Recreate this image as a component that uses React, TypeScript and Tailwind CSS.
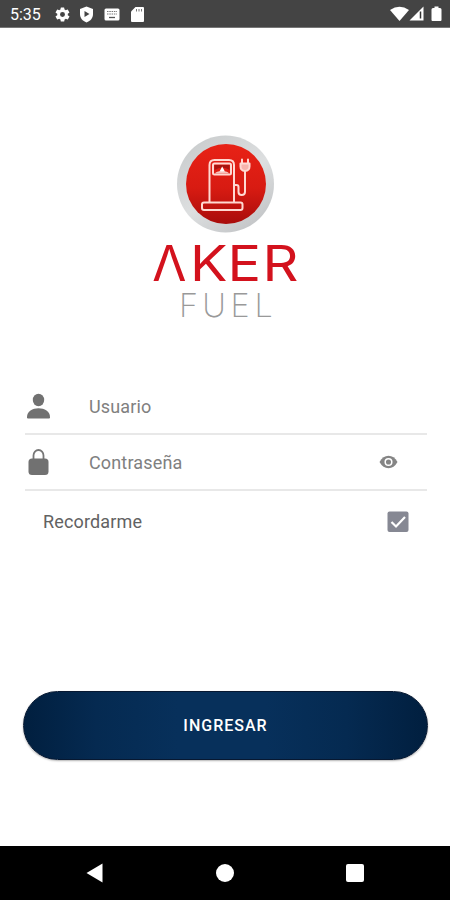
import type { ReactNode } from "react";

function StatusBar() {
  return (
    <header className="flex h-7 shrink-0 items-center justify-between border-b border-[#777] bg-[#444] pl-[10px] pr-[5px] text-white">
      <div className="flex items-center pt-[2px]">
        <span className="w-[44px] text-[16px] leading-5">5:35</span>
        <svg className="mr-[8px]" width="17" height="17" viewBox="0 0 24 24" fill="#fff">
          <path d="M19.4 13c.1-.3.1-.7.1-1s0-.7-.1-1l2.1-1.6a.5.5 0 0 0 .1-.6l-2-3.5a.5.5 0 0 0-.6-.2l-2.5 1c-.5-.4-1.100-.7-1.700-1l-.4-2.600A.5.5 0 0 0 14 2h-4a.5.5 0 0 0-.5.5L9.100 5.100c-.6.2-1.200.6-1.700 1l-2.500-1a.5.5 0 0 0-.6.2l-2 3.500a.5.5 0 0 0 .1.6L4.600 11v2l-2.200 1.600a.5.5 0 0 0-.1.6l2 3.500c.1.2.4.3.6.2l2.500-1c.5.4 1.100.7 1.700 1l.4 2.600c0 .3.2.5.5.5h4c.2 0 .5-.2.5-.5l.4-2.600c.6-.2 1.200-.6 1.700-1l2.500 1c.2.1.5 0 .6-.2l2-3.500a.5.5 0 0 0-.1-.6zM12 15.500a3.500 3.500 0 1 1 0-7 3.500 3.500 0 0 1 0 7z" />
        </svg>
        <svg className="mr-[10px]" width="15" height="17" viewBox="0 0 15 17">
          <path d="M7.500.5 14 3v5c0 4-2.500 7-6.500 8.500C3.500 15 1 12 1 8V3z" fill="#fff" />
          <path d="M5.500 5v6l5-3z" fill="#444" />
        </svg>
        <svg className="mr-[11px]" width="16" height="13" viewBox="0 0 16 13">
          <rect x=".5" y=".5" width="15" height="12" rx="1.500" fill="#fff" />
          <path d="M3 3.500h10M3 6h10" stroke="#777" strokeDasharray="1.500 .8" />
          <path d="M5 9.500h6" stroke="#555" strokeWidth="1.300" />
        </svg>
        <svg width="13" height="15" viewBox="0 0 13 15">
          <path d="M4.500 0H12a1 1 0 0 1 1 1v13a1 1 0 0 1-1 1H1a1 1 0 0 1-1-1V4.500z" fill="#fff" />
          <path d="M5.500 2v2.500M8 2v2.500M10.500 2v2.500" stroke="#777" />
        </svg>
      </div>
      <svg width="55" height="18" viewBox="0 0 55 18">
        <path d="M0 5Q9.500-1.500 19 5L9.500 16z" fill="#fff" />
        <path d="M33.500 1.500v14h-14z" fill="#fff" />
        <path d="M30.500 6.500v7" stroke="#333" strokeWidth="1.500" />
        <path d="M44.500 1.500h4V3h1.500q1.500 0 1.500 1.500V15q0 1-1 1h-8q-1 0-1-1V4.500Q41.500 3 43 3h1.500z" fill="#fff" />
      </svg>
    </header>
  );
}

function Logo() {
  return (
    <svg className="mx-auto mt-[104px] block shrink-0" width="160" height="192" viewBox="145 132 160 192">
      <defs>
        <linearGradient id="rim" x1="0" y1="0" x2=".7" y2="1">
          <stop offset="0" stopColor="#c6c9ca" />
          <stop offset=".6" stopColor="#dddfe0" />
          <stop offset="1" stopColor="#c4c6c8" />
        </linearGradient>
        <linearGradient id="disc" x1="0" y1="0" x2="0" y2="1">
          <stop offset="0" stopColor="#e82216" />
          <stop offset=".55" stopColor="#d81b12" />
          <stop offset="1" stopColor="#a80c0b" />
        </linearGradient>
      </defs>
      <circle cx="225.500" cy="184" r="48.500" fill="url(#rim)" />
      <circle cx="226" cy="184" r="40" fill="url(#disc)" />
      <g fill="none" stroke="#ffd9d2" strokeWidth="2" strokeLinejoin="round" strokeLinecap="round">
        <path d="M209.500 202v-37q0-5 5-5h14.500q5 0 5 5v37" />
        <rect x="202" y="202.500" width="40.500" height="7.500" rx="2" />
        <rect x="213" y="163.500" width="18" height="11" rx="1.500" />
        <path d="M235 185h1.500q2 0 2 2v5q0 3 3.200 3t3.300-3v-21" />
        <path d="M242 163v-3.500M248 163v-3.500" />
        <path d="M240.500 163.500h9v3q0 4-4.500 4.500-4.500-.5-4.500-4.500z" fill="#f7b4ac" />
      </g>
      <path d="M214.500 165h15v5q-7-5-15 0z" fill="#a9140f" />
      <path d="M215 173.500q1-2.500 7-2.500t7 2.500z" fill="#f7c4bd" />
      <path d="m222.200 166.500-2.700 5h5.400z" fill="#fff" />
      <g fill="#d3121d" className="font-['Inter',sans-serif] text-[49.500px]">
        <text x="152.200" y="281.300">Λ</text>
        <text x="168.100 201.300 232.300" y="281.300" transform="scale(1.13 1)">KER</text>
      </g>
      <text x="179 202.300 230.500 254.500" y="317" fill="#999" className="font-['Inter',sans-serif] text-[32.500px] font-extralight">FUEL</text>
    </svg>
  );
}

function Field({ icon, label, action }: { icon: ReactNode; label: string; action?: ReactNode }) {
  return (
    <div className="flex h-14 items-center border-b-2 border-[#e8e8e8]">
      <div className="flex w-16 items-center">{icon}</div>
      <span className="flex-1 text-[18px] tracking-[0.15px] text-[#808080]">{label}</span>
      {action}
    </div>
  );
}

export default function App() {
  return (
    <div className="flex h-[900px] w-full flex-col overflow-hidden bg-white font-['Roboto',sans-serif]">
      <StatusBar />
      <main className="flex flex-1 flex-col">
        <Logo />
        <form className="mt-[55px] pl-[25px] pr-[23px]">
          <Field
            label="Usuario"
            icon={
              <svg width="26" height="26" viewBox="0 0 26 26" fill="#717171">
                <ellipse cx="13.500" cy="7" rx="5.700" ry="6.200" />
                <path d="M2 24.300C2 18 7.500 15.300 13.500 15.300S25 18 25 24.300q0 1.200-1 1.200H3q-1 0-1-1.200z" />
              </svg>
            }
          />
          <Field
            label="Contraseña"
            icon={
              <svg width="26" height="28" viewBox="0 0 26 28">
                <path d="M8.500 12V7.500a5 5.500 0 0 1 10 0V12" fill="none" stroke="#777" strokeWidth="1.800" />
                <rect x="3.500" y="10.500" width="20" height="16.500" rx="3.500" fill="#717171" />
              </svg>
            }
            action={
              <svg className="mr-[29px]" width="19" height="14" viewBox="0 0 19 14">
                <path d="M.5 7Q4 .8 9.500.8T18.500 7Q15 13.200 9.500 13.200T.5 7z" fill="#858585" />
                <circle cx="9.500" cy="7" r="3.300" fill="#858585" stroke="#fff" strokeWidth="1.500" />
              </svg>
            }
          />
          <div className="mt-[20px] flex h-[22px] items-center justify-between pl-[18px] pr-[18px]">
            <span className="pb-[2px] text-[18px] tracking-[0.15px] text-[#626262]">Recordarme</span>
            <svg width="22" height="22" viewBox="0 0 22 22">
              <rect x=".5" y=".5" width="21" height="20.500" rx="2" fill="#868893" />
              <path d="m4.500 11 4.500 4.500 9-9.500" fill="none" stroke="#fff" strokeWidth="2.200" />
            </svg>
          </div>
          <button
            type="button"
            className="-ml-[2px] mt-[158px] block h-[69px] w-[405px] rounded-full border border-[#071831] bg-[linear-gradient(90deg,#011f3f_0%,#052a51_18%,#07305b_38%,#07305b_60%,#052a51_80%,#011f3f_100%)] text-[16px] font-medium tracking-[1px] text-white shadow-[0_1px_2px_rgba(0,0,0,0.3)]"
          >
            INGRESAR
          </button>
        </form>
      </main>
      <nav className="flex h-[54px] shrink-0 items-center justify-between bg-black px-[86px]">
        <svg width="17" height="20" viewBox="0 0 17 20"><path d="M16.500.5v19L.5 10z" fill="#fff" /></svg>
        <span className="size-[18px] rounded-full bg-white" />
        <span className="size-[18px] rounded-[2px] bg-white" />
      </nav>
    </div>
  );
}
